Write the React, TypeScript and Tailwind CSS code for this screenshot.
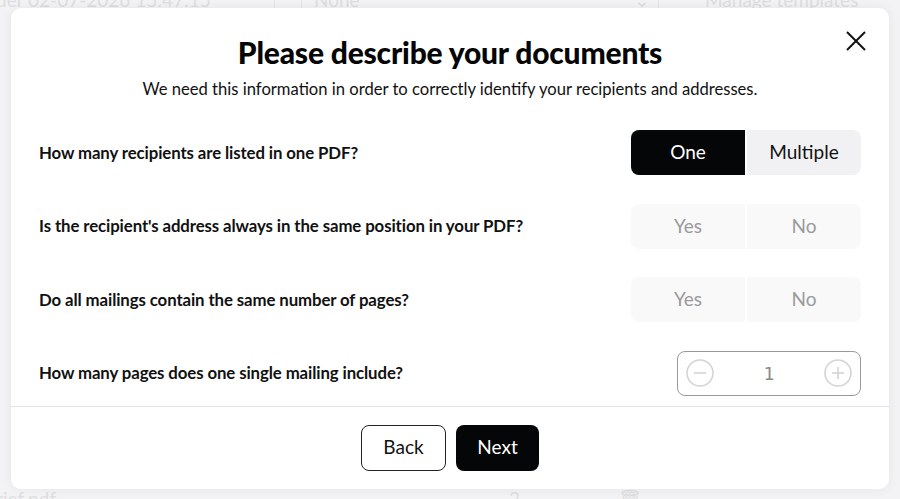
import React from "react";

const font = { fontFamily: "Lato, 'Noto Sans', sans-serif" };

function Segmented({ left, right, active, disabled }: { left: string; right: string; active?: "left" | "right"; disabled?: boolean }) {
  const base = "flex-1 flex items-center justify-center text-[19px]";
  const on = "bg-[#050607] text-white";
  const off = disabled ? "bg-[#f9f9fa] text-[#9a9a9a]" : "bg-[#f1f1f3] text-[#111]";
  return (
    <div className="flex w-[230px] h-[45px] gap-[2px]">
      <div className={`${base} rounded-l-[8px] ${active === "left" ? on : off}`}>{left}</div>
      <div className={`${base} rounded-r-[8px] ${active === "right" ? on : off}`}>{right}</div>
    </div>
  );
}

function CircleIcon({ plus }: { plus?: boolean }) {
  return (
    <svg width="28" height="28" viewBox="0 0 28 28" fill="none" stroke="#d4d4d4" strokeWidth="1.6">
      <circle cx="14" cy="14" r="13" />
      <line x1="8" y1="14" x2="20" y2="14" />
      {plus && <line x1="14" y1="8" x2="14" y2="20" />}
    </svg>
  );
}

function Row({ q, children }: { q: string; children: React.ReactNode }) {
  return (
    <div className="flex items-center justify-between h-[45px]">
      <div className="text-[16.8px] font-bold text-[#111] tracking-[-0.1px]">{q}</div>
      {children}
    </div>
  );
}

export default function App() {
  return (
    <div className="relative w-full h-[499px] overflow-hidden bg-[#f3f3f5]" style={font}>
      {/* background page */}
      <div className="flex flex-col h-full text-[#dedee0]">
        <div className="flex items-center h-[24px] -mt-[12px] text-[19px]">
          <span className="w-[278px] -ml-[4px]">der 02-07-2026 15:47:15</span>
          <span className="w-[1px] h-[20px] bg-[#e2e2e4]" />
          <span className="ml-[26px] w-[1px] h-[20px] bg-[#e2e2e4]" />
          <span className="ml-[12px] w-[320px]">None</span>
          <span className="w-[20px]">⌄</span>
          <span className="ml-[4px] w-[1px] h-[20px] bg-[#e2e2e4]" />
          <span className="ml-[46px]">Manage templates</span>
        </div>
        <div className="flex-1" />
        <div className="flex items-center h-[24px] -mb-[12px] text-[19px]">
          <span className="w-[513px] -ml-[4px]">rief.pdf</span>
          <span className="w-[109px]">2</span>
          <span>🗑</span>
        </div>
      </div>

      {/* modal overlay */}
      <div className="absolute inset-0 pl-[11px] pr-[11px] pt-[8px] pb-[10px] flex">
        <div className="relative flex-1 bg-white rounded-[10px] shadow-[0_0_12px_rgba(0,0,0,0.06)] flex flex-col">
          <button className="absolute right-[22px] top-[22px] w-[22px] h-[22px] flex items-center justify-center">
            <svg width="20" height="20" viewBox="0 0 20 20" stroke="#111" strokeWidth="2" fill="none">
              <line x1="1" y1="1" x2="19" y2="19" />
              <line x1="19" y1="1" x2="1" y2="19" />
            </svg>
          </button>
          <div className="flex flex-col items-center pt-[26px]">
            <h1 className="text-[30px] font-black text-[#050505] leading-[36px] tracking-[-0.2px]">Please describe your documents</h1>
            <p className="mt-[9px] text-[16.6px] text-[#111] leading-[20px]">We need this information in order to correctly identify your recipients and addresses.</p>
          </div>
          <div className="flex flex-col gap-[28.5px] px-[28px] mt-[31px]">
            <Row q="How many recipients are listed in one PDF?">
              <Segmented left="One" right="Multiple" active="left" />
            </Row>
            <Row q="Is the recipient's address always in the same position in your PDF?">
              <Segmented left="Yes" right="No" disabled />
            </Row>
            <Row q="Do all mailings contain the same number of pages?">
              <Segmented left="Yes" right="No" disabled />
            </Row>
            <Row q="How many pages does one single mailing include?">
              <div className="w-[184px] h-[45px] border-[1.5px] border-[#9a9a9a] rounded-[8px] flex items-center justify-between px-[8px]">
                <CircleIcon />
                <span className="text-[18px] text-[#8a8a8a]" style={{ fontFamily: "'DejaVu Sans Mono', monospace" }}>1</span>
                <CircleIcon plus />
              </div>
            </Row>
          </div>
          <div className="mt-[10px] border-t border-[#e4e4e6]" />
          <div className="flex justify-center gap-[10px] pt-[18px]">
            <button className="w-[85px] h-[46px] border-[1.5px] border-[#222] rounded-[8px] text-[19px] text-[#111]">Back</button>
            <button className="w-[83px] h-[46px] bg-[#050607] rounded-[8px] text-[19px] text-white">Next</button>
          </div>
        </div>
      </div>
    </div>
  );
}
